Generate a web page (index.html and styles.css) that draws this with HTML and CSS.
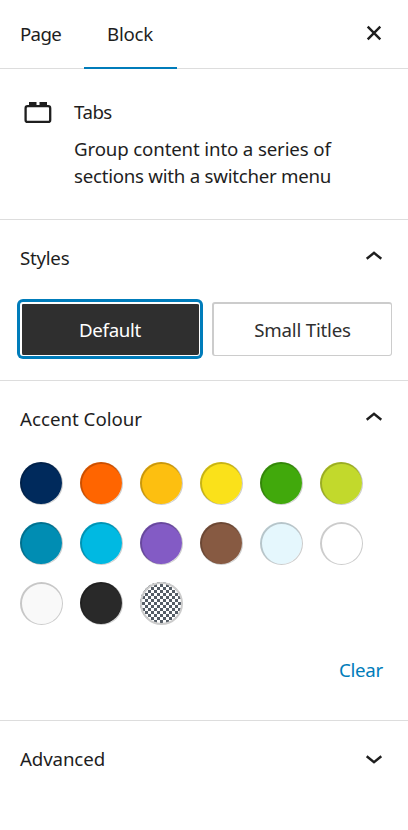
FILE: index.html
```html
<!DOCTYPE html>
<html lang="en">
<head>
<meta charset="utf-8">
<title>Block settings</title>
<link rel="stylesheet" href="styles.css">
</head>
<body>
<aside class="sidebar">
  <header class="tabs">
    <button class="tab tab-page"><span class="t-page">Page</span></button>
    <button class="tab tab-active"><span class="t-block">Block</span></button>
    <button class="close" aria-label="Close"><svg width="16" height="16" viewBox="0 0 16 16"><path d="M1.7 1.7 14.3 14.3M14.3 1.7 1.7 14.3"/></svg></button>
  </header>
  <section class="card">
    <svg class="card-icon" width="28" height="22" viewBox="0 0 28 22"><rect x="1.6" y="4.200" width="24.600" height="15.700" rx="2"/><path class="stud" d="M5 0h7.500v4H5zM15.500 0h7.500v4h-7.500z"/></svg>
    <div class="card-text">
      <h2><span class="t-tabs">Tabs</span></h2>
      <p><span class="t-desc1">Group content into a series of</span><br><span class="t-desc2">sections with a switcher menu</span></p>
    </div>
  </section>
  <section class="panel panel-styles">
    <h2 class="title"><span class="t-styles">Styles</span><svg width="18" height="10" viewBox="0 0 18 10"><path d="M1.7 7.8 9 1.9l7.3 5.900"/></svg></h2>
    <div class="styles">
      <button class="style style-active"><span class="t-default">Default</span></button>
      <button class="style"><span class="t-small">Small Titles</span></button>
    </div>
  </section>
  <section class="panel panel-colour">
    <h2 class="title"><span class="t-accent">Accent Colour</span><svg width="18" height="10" viewBox="0 0 18 10"><path d="M1.7 7.8 9 1.9l7.3 5.900"/></svg></h2>
    <div class="swatches">
      <i class="swatch navy"></i><i class="swatch orange"></i><i class="swatch amber"></i><i class="swatch yellow"></i><i class="swatch green"></i><i class="swatch lime"></i>
      <i class="swatch teal"></i><i class="swatch cyan"></i><i class="swatch purple"></i><i class="swatch brown"></i><i class="swatch ice"></i><i class="swatch white"></i>
      <i class="swatch pale"></i><i class="swatch black"></i><i class="swatch clear-fill"></i>
    </div>
    <div class="actions"><button class="clear"><span class="t-clear">Clear</span></button></div>
  </section>
  <section class="panel panel-advanced">
    <h2 class="title"><span class="t-adv">Advanced</span><svg width="18" height="10" viewBox="0 0 18 10"><path d="M1.7 2.2 9 8.100l7.300-5.900"/></svg></h2>
  </section>
</aside>
</body>
</html>
```
FILE: styles.css
```css
*, *::after { box-sizing: border-box; }
body {
  margin: 0;
  background: #fff;
  color: #1e1e1e;
  font: 18.7px/27px "Noto Sans", "Open Sans", sans-serif;
}
button {
  border: 0;
  padding: 0;
  background: none;
  color: inherit;
  font: inherit;
}
h2, p { margin: 0; font-size: inherit; font-weight: 400; }
span { white-space: nowrap; }
svg { display: block; flex: none; fill: none; stroke: #1e1e1e; stroke-width: 2.4; }
.sidebar { width: 408px; height: 830px; overflow: hidden; }

.t-page { letter-spacing: -.7px; }
.t-block { letter-spacing: -.25px; }
.t-tabs { letter-spacing: -.5px; }
.t-desc1 { letter-spacing: -.15px; }
.t-desc2 { letter-spacing: -.26px; }
.t-styles { letter-spacing: -.25px; }
.t-default { letter-spacing: -.3px; }
.t-small { letter-spacing: -.2px; }
.t-clear { letter-spacing: -.25px; }
.t-adv { letter-spacing: -.12px; }

.tabs { display: flex; height: 69px; border-bottom: 1px solid #ddd; }
.tab { height: 69px; text-align: left; padding: 0 0 2px 23px; }
.tab-page { width: 84px; padding-left: 20px; }
.tab-active { width: 93px; box-shadow: inset 0 -2px #007cba; }
.close { margin-left: auto; padding: 0 26px 2px 0; }

.card { display: flex; height: 151px; padding: 29px 20px 0 24px; border-bottom: 1px solid #ddd; }
.card-icon { margin: 4px 22px 0 0; stroke-width: 2.3; }
.stud { fill: #1e1e1e; stroke: none; }
.card-text p { margin-top: 10px; }

.panel { border-bottom: 1px solid #ddd; }
.title { display: flex; align-items: center; justify-content: space-between; padding: 0 25px 2px 20px; height: 77px; }
.title svg { margin-bottom: 4px; }
.panel-styles { height: 161px; }
.styles { display: flex; gap: 12px; padding: 5px 16px 0 20px; }
.style { flex: none; width: 180px; height: 54px; border: solid #ccc; border-width: 2px 1px 1px 2px; border-radius: 3px; color: #2f2f2f; }
.style-active { padding-right: 1px; background: #2f2f2f; color: #fff; border-color: #fff; box-shadow: 0 0 0 3px #007cba; }

.panel-colour { height: 340px; }
.swatches { display: grid; grid-template-columns: repeat(6, 42px); gap: 18px; padding: 4px 0 0 20px; }
.swatch { position: relative; width: 42px; height: 42px; border-radius: 50%; }
.swatch::after { content: ""; position: absolute; top: 0; left: 0; width: 43px; height: 43px; border: solid rgba(0,0,0,.2); border-width: 2px 1px 1px 2px; border-radius: 50%; }
.navy { background: #002a5c; }
.orange { background: #ff6500; }
.amber { background: #fdbf10; }
.yellow { background: #fae11a; }
.green { background: #41a90c; }
.lime { background: #c2d92c; }
.teal { background: #008db3; }
.cyan { background: #00b9e2; }
.purple { background: #835bc5; }
.brown { background: #875a42; }
.ice { background: #e5f7fd; }
.white { background: #fff; }
.pale { background: #f9f9f9; }
.black { background: #292929; }
.clear-fill { background: conic-gradient(#fff 25%, #555d66 0 50%, #fff 0 75%, #555d66 0) 2px 2px / 6px 6px; }
.clear-fill::after { border-color: #ccc; border-width: 2px; }
.actions { display: flex; justify-content: flex-end; padding: 32px 25px 0 0; }
.clear { color: #007cba; }

.panel-advanced { border: 0; }
.panel-advanced .title svg { margin: 1px 0 0; }
```
